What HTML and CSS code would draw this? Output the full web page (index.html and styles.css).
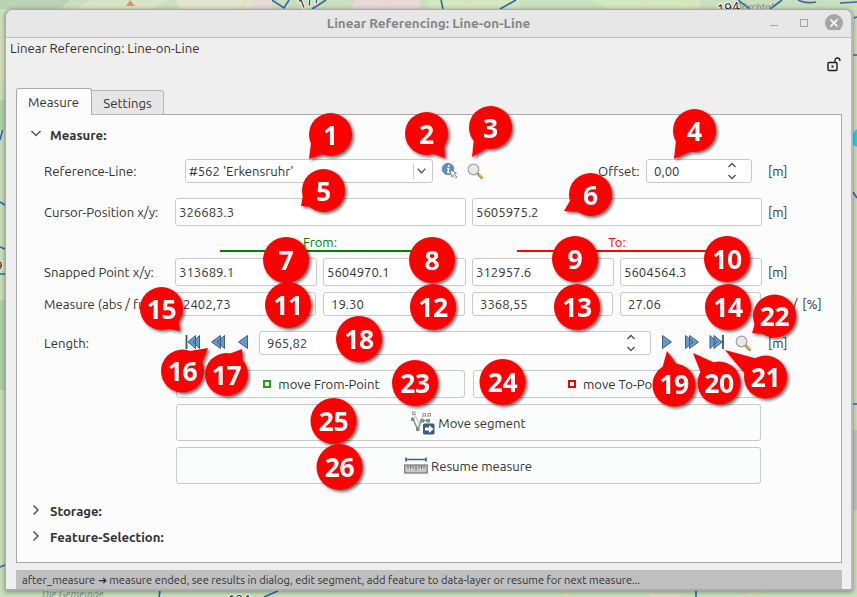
FILE: index.html
```html
<!DOCTYPE html>
<html lang="en">
<head>
<meta charset="utf-8">
<title>Linear Referencing: Line-on-Line</title>
<link rel="stylesheet" href="styles.css">
</head>
<body>
<svg class="map" width="857" height="597" viewBox="0 0 857 597" aria-hidden="true">
  <rect width="857" height="597" fill="#c9dfbd"/>
  <path d="M0 0H70L60 9H0z" fill="#b9d3b3"/>
  <path d="M90 0H170L150 9H75z" fill="#d9e6c3"/>
  <path d="M175 0H260V9H180z" fill="#e0e5cc"/>
  <path d="M355 0H420V9H350zM255 0H272V9H250z" fill="#e8d8d6"/>
  <path d="M425 0H520V9H430zM590 0H700V9H610z" fill="#d3e8bd"/>
  <path d="M126 6l4-6 5 6z" fill="#dc9672"/>
  <g fill="none" stroke="#2d67b0" stroke-width="1.6">
    <path d="M272 0l12 8 5-8M312 9l14-9M441 0l2 9M500 9l16-9M738 0l12 9M770 9l12-9M798 0q8 4 18 2M840 3l17-1"/>
    <path d="M0 140l5-20M0 202l5 3M0 247l5 2M0 274h5M0 567l5-2M854 18l3-1M853 55h4M853 192l4 6M853 404h4M159 597l1-6M264 597l14-6M696 591v6"/>
  </g>
  <g fill="none" stroke="#e8d9ad" stroke-width="1.5">
    <path d="M240 9l6-9M381 9l10-9M465 0l6 9M640 9l8-9M685 0l12 9M0 85h5M0 320l5 5M853 300l4-10M853 553l4-6M740 597l25-6M560 591l10 6"/>
  </g>
  <path d="M0 20h5v60H0z" fill="#d5dfc0"/>
  <path d="M0 100h5v30H0zM0 300h5v90H0zM853 430h4v80h-4z" fill="#b3d0ae"/>
  <path d="M853 133l4-4v18l-4-2z" fill="#00e5ee"/>
  <path d="M651 594h30v3h-32z" fill="#f0d3cb"/>
  <text x="300" y="9" class="map-road" transform="rotate(-20 300 9)">177</text>
  <text x="718" y="14" class="map-road" transform="rotate(-8 718 14)">194</text>
  <text x="735" y="11" class="map-place">Dürchtal</text>
  <text x="42" y="598" class="map-place">Die Gemeinde</text>
  <text x="228" y="604" class="map-road">104</text>
  <text x="-5" y="270" class="map-road">9</text>
</svg>

<main class="window">
  <header class="titlebar">
    <h1>Linear Referencing: Line-on-Line</h1>
    <svg class="controls" width="80" height="20" viewBox="0 0 80 20">
      <path d="M3 15.500h8" stroke="#a5a5a5"/>
      <rect x="33.500" y="9.500" width="7" height="7" fill="none" stroke="#a5a5a5"/>
      <circle cx="67" cy="13" r="9" fill="#a6a6a6"/>
      <path d="M63.500 9.500l7 7m0-7l-7 7" stroke="#fff" stroke-width="1.700"/>
    </svg>
  </header>
  <div class="heading">
    <span>Linear Referencing: Line-on-Line</span>
    <svg class="lock" width="14" height="15" viewBox="0 0 14 15">
      <rect x="1" y="5.500" width="9" height="8" rx="1" fill="none" stroke="#1c1c1c" stroke-width="1.400"/>
      <path d="M8 5V3.500Q8 1 10.500 1T13 4" fill="none" stroke="#1c1c1c" stroke-width="1.300"/>
      <rect x="4.500" y="8.500" width="2" height="2" fill="#1c1c1c"/>
    </svg>
  </div>
  <nav class="tabs"><span class="tab active">Measure</span><span class="tab">Settings</span></nav>

  <section class="panel">
    <h2 class="group first"><svg width="12" height="12" viewBox="0 0 12 12"><path d="M1.500 3L6 7.500 10.500 3"/></svg><span>Measure:</span></h2>

    <div class="row reference">
      <label>Reference-Line:</label>
      <div class="combo"><span>#562 'Erkensruhr'</span><svg width="16" height="16" viewBox="0 0 16 16"><path d="M4 5.500L8 10l4-4.500"/></svg></div>
      <svg class="info" width="18" height="18" viewBox="0 0 18 18">
        <circle cx="7" cy="7" r="5.800" fill="#5d8fc5" stroke="#4a7ab0" stroke-width=".7"/>
        <path d="M7.800 3v1.800M6 6.500h1.700L7 10.500h1.500" fill="none" stroke="#fff" stroke-width="1.500"/>
        <path d="M9 8l6.500 3-2.500 1 3 3-1.200 1.200-3-3-1 2z" fill="#fff" stroke="#777" stroke-width=".8"/>
      </svg>
      <svg class="glass" width="17" height="17" viewBox="0 0 17 17"><path d="M10.500 10.500l5 5" stroke="#b1872c" stroke-width="2.800"/><path d="M11.500 10.800l4 4" stroke="#ebc551" stroke-width="1.200"/><circle cx="6.500" cy="6.500" r="5.300" fill="#e9eae5" stroke="#a1a1a1" stroke-width="1.200"/></svg>
      <label class="offset">Offset:</label>
      <div class="spin offset-spin"><span>0,00</span><svg width="12" height="20" viewBox="0 0 12 20"><path d="M2.500 6L6 2.500 9.500 6M2.500 14L6 17.500 9.500 14"/></svg></div>
      <span class="unit">[m]</span>
    </div>

    <div class="row cursor">
      <label>Cursor-Position x/y:</label>
      <div class="fields two"><span>326683.3</span><span>5605975.2</span></div>
      <span class="unit">[m]</span>
    </div>

    <div class="captions"><span class="from">From:</span><span class="to">To:</span></div>

    <div class="row snapped">
      <label>Snapped Point x/y:</label>
      <div class="fields four"><span>313689.1</span><span>5604970.1</span><span>312957.6</span><span>5604564.3</span></div>
      <span class="unit">[m]</span>
    </div>

    <div class="row measures">
      <label>Measure (abs / fract):</label>
      <div class="fields four"><span>2402,73</span><span>19.30</span><span>3368,55</span><span>27.06</span></div>
      <span class="unit">[m] / [%]</span>
    </div>

    <div class="row length">
      <label>Length:</label>
      <svg class="back" width="66" height="16" viewBox="0 0 66 16"><g class="arrow">
        <path d="M14.500 1.500v13L8 8zM10.500 1.500v13L3 8z"/><path d="M1.500 1v14" class="bar"/>
        <path d="M39.500 1.500v13L32 8zM35.500 1.500v13L26.500 8z"/>
        <path d="M62.500 1.500v13L53.500 8z"/></g></svg>
      <div class="spin length-spin"><span>965,82</span><svg width="12" height="20" viewBox="0 0 12 20"><path d="M2.500 6L6 2.500 9.500 6M2.500 14L6 17.500 9.500 14"/></svg></div>
      <svg class="forward" width="66" height="16" viewBox="0 0 66 16"><g class="arrow">
        <path d="M1.500 1.500v13L10.500 8z"/>
        <path d="M24.500 1.500v13L32 8zM28.500 1.500v13L37.500 8z"/>
        <path d="M49 1.500v13L56 8zM53 1.500v13L61 8z"/><path d="M62 1v14" class="bar"/></g></svg>
      <svg class="glass" width="17" height="17" viewBox="0 0 17 17"><path d="M10.500 10.500l5 5" stroke="#b1872c" stroke-width="2.800"/><path d="M11.500 10.800l4 4" stroke="#ebc551" stroke-width="1.200"/><circle cx="6.500" cy="6.500" r="5.300" fill="#e9eae5" stroke="#a1a1a1" stroke-width="1.200"/></svg>
      <span class="unit">[m]</span>
    </div>

    <div class="actions">
      <div class="pair">
        <button><i class="marker"></i><span>move From-Point</span></button>
        <button><i class="marker red"></i><span>move To-Point</span></button>
      </div>
      <button class="wide">
        <svg width="24" height="24" viewBox="0 0 24 24">
          <path d="M3 2.500l5 9.500 4-7h6" fill="none" stroke="#b9c9b5" stroke-width="1.200"/>
          <path d="M2 8l4.500 10L11 9.500h7" fill="none" stroke="#66a85e" stroke-width="1.500"/>
          <g fill="#fff" stroke="#999" stroke-width="1"><rect x="1.500" y="1" width="2.500" height="2.500"/><rect x="12" y="2.500" width="2.500" height="2.500"/><rect x="17" y="2.500" width="2.500" height="2.500"/></g>
          <g fill="#888"><rect x="0" y="6.500" width="3.500" height="3.500"/><rect x="5" y="16.500" width="3.500" height="3.500"/><rect x="9.500" y="8" width="3.500" height="3.500"/><rect x="15.500" y="8" width="3.500" height="3.500"/></g>
          <rect x="12" y="12.500" width="11.500" height="11" rx="1.500" fill="#3c5d7b"/><path d="M14 16.500h4V14l4.500 4-4.500 4v-2.500h-4z" fill="#fff"/>
        </svg><span>Move segment</span></button>
      <button class="wide resume">
        <svg width="24" height="18" viewBox="0 0 24 18">
          <path d="M2 2.500h20M2 .5v4M22 .5v4" stroke="#3f5f83" stroke-width="1.600"/>
          <rect x=".7" y="8" width="22.500" height="8" fill="#c9c9c5" stroke="#777" stroke-width="1.200"/>
          <path d="M4 8.500v3M6.500 8.500v3M9 8.500v3M12 8.500v5M15 8.500v3M17.500 8.500v3M20 8.500v3" stroke="#666"/>
        </svg><span>Resume measure</span></button>
    </div>

    <h2 class="group storage"><svg width="12" height="12" viewBox="0 0 12 12"><path d="M3.500 1.500L8 6 3.500 10.500"/></svg><span>Storage:</span></h2>
    <h2 class="group"><svg width="12" height="12" viewBox="0 0 12 12"><path d="M3.500 1.500L8 6 3.500 10.500"/></svg><span>Feature-Selection:</span></h2>
  </section>

  <footer class="status"><span>after_measure ➜ measure ended, see results in dialog, edit segment, add feature to data-layer or resume for next measure...</span></footer>
</main>

<svg class="callouts" width="857" height="597" viewBox="0 0 857 597">
  <g><path d="M311 143L309 159 326 153z"/><circle cx="330.500" cy="134.500" r="21.500"/><text x="330.500" y="144.500">1</text></g>
  <g><path d="M428 152L445 158 444 142z"/><circle cx="426.500" cy="133.500" r="21.500"/><text x="426.500" y="143.500">2</text></g>
  <g><path d="M474 138L472 157 489 147z"/><circle cx="490.500" cy="127.500" r="21.500"/><text x="490.500" y="137.500">3</text></g>
  <g><path d="M676 140L674 159 692 151z"/><circle cx="694.500" cy="130.500" r="21.500"/><text x="694.500" y="141">4</text></g>
  <g><path d="M303 195L301 206 314 207z"/><circle cx="323.500" cy="190.500" r="21.500"/><text x="323.500" y="200.500">5</text></g>
  <g><path d="M571 199L564 211 582 212z"/><circle cx="590.500" cy="194.500" r="21.500"/><text x="590.500" y="204.500">6</text></g>
  <g><circle cx="286" cy="260" r="23"/><text x="286" y="270">7</text></g>
  <g><circle cx="432" cy="260" r="23"/><text x="432" y="269.500">8</text></g>
  <g><circle cx="575" cy="259" r="23"/><text x="575" y="268.500">9</text></g>
  <g><circle cx="727" cy="259" r="23"/><text x="727" y="268.500">10</text></g>
  <g><circle cx="288" cy="305" r="23"/><text x="288" y="314.500">11</text></g>
  <g><circle cx="433" cy="307" r="23"/><text x="433" y="316.500">12</text></g>
  <g><circle cx="577" cy="307" r="23"/><text x="577" y="316.500">13</text></g>
  <g><circle cx="728" cy="307" r="23"/><text x="728" y="316.500">14</text></g>
  <g><path d="M165 328L180 331 178 318z"/><circle cx="161.500" cy="308.500" r="21.500"/><text x="161.500" y="318.500">15</text></g>
  <g><path d="M184 352L208 348 200 368z"/><circle cx="182.500" cy="371" r="21.500"/><text x="182.500" y="381">16</text></g>
  <g><path d="M226 355L242 349 243 367z"/><circle cx="226.500" cy="374.500" r="21.500"/><text x="226.500" y="384.500">17</text></g>
  <g><circle cx="359" cy="339" r="23"/><text x="359" y="348.500">18</text></g>
  <g><path d="M662 369L667 351 678 366z"/><circle cx="674" cy="385" r="21.500"/><text x="674" y="394">19</text></g>
  <g><path d="M701 373L693 353 715 363z"/><circle cx="719" cy="383" r="21.500"/><text x="719" y="393">20</text></g>
  <g><path d="M746 375L725 350 758 359z"/><circle cx="765.500" cy="377" r="21.500"/><text x="765.500" y="387">21</text></g>
  <g><path d="M755 323L752 333 766 334z"/><circle cx="774.500" cy="316" r="21.500"/><text x="774.500" y="326">22</text></g>
  <g><circle cx="415" cy="383" r="23"/><text x="415" y="393">23</text></g>
  <g><circle cx="502.500" cy="382" r="23"/><text x="502.500" y="392">24</text></g>
  <g><circle cx="333.500" cy="421" r="23"/><text x="333.500" y="431">25</text></g>
  <g><circle cx="339.500" cy="467" r="23"/><text x="339.500" y="477">26</text></g>
</svg>
</body>
</html>
```
FILE: styles.css
```css
* { box-sizing: border-box; }
body {
  margin: 0;
  width: 857px;
  height: 597px;
  padding: 9px 4px 6px 5px;
  overflow: hidden;
  position: relative;
  font: 13.15px/20px Ubuntu, "Noto Sans", sans-serif;
  color: #333;
}
span, label { white-space: nowrap; }
svg { flex: none; display: block; }
.map { position: absolute; left: 0; top: 0; z-index: -1; }
.map-road { font: 13px "Noto Sans", sans-serif; fill: #222; stroke: #fff; stroke-width: 2px; paint-order: stroke; }
.map-place { font: italic 10px "Noto Sans", sans-serif; fill: #82968a; }

.window {
  height: 582px;
  width: 848px;
  background: #efefef;
  border: 1px solid #aaa;
  border-right: 2px solid #b8b8b8;
  border-bottom: 2px solid #aaa;
  border-radius: 8px 8px 0 0;
  box-shadow: 0 1px 5px rgba(0, 0, 0, .4);
  display: flex;
  flex-direction: column;
}
.titlebar {
  height: 28px;
  flex: none;
  display: flex;
  justify-content: flex-end;
  background: #e7e7e7;
  border-bottom: 1px solid #bfbfbf;
  border-radius: 7px 7px 0 0;
}
.titlebar h1 {
  flex: 1;
  margin: 0 0 0 84px;
  padding-top: 4px;
  text-align: center;
  font-size: 13.4px;
  line-height: 20px;
  font-weight: 600;
  color: #858585;
}
.controls { margin: 0 4px 0 0; }
.heading { height: 50px; flex: none; display: flex; justify-content: space-between; padding-left: 4px; }
.lock { margin: 19px 10px 0 0; }

.tabs { display: flex; align-items: flex-end; height: 27px; flex: none; margin-left: 10px; position: relative; z-index: 1; margin-bottom: -1px; }
.tab {
  height: 25px;
  width: 72px;
  line-height: 24px;
  text-align: center;
  background: #e6e6e6;
  border: 1px solid #b5b5b5;
  border-left: 0;
  border-radius: 0 3px 0 0;
}
.tab.active { height: 27px; width: 76px; line-height: 27px; padding-right: 1px; background: #fcfcfc; border: 1px solid #aaa; border-bottom: 0; border-radius: 3px 3px 0 0; }

.panel { width: 826px; height: 449px; flex: none; margin-left: 10px; background: #fcfcfc; border: 1px solid #a8a8a8; padding-left: 13px; }
.group { display: flex; align-items: center; height: 26px; margin: 0; font-size: 13.15px; font-weight: 700; gap: 8px; }
.group svg { margin-top: -3px; }
.group svg path, .combo path, .spin path { fill: none; stroke: #555; stroke-width: 1.5; }
.group.first { margin-top: 7px; }

.row { display: flex; align-items: center; padding-left: 14px; }
.row > label:first-child { width: 131px; flex: none; }
.reference { height: 24px; margin-top: 11px; }
.combo, .spin, .fields span { background: #fff; border: 1px solid #c8c8c8; border-radius: 3px; display: flex; align-items: center; }
.combo { width: 248px; height: 24px; margin-left: 10px; justify-content: space-between; padding: 0 3px; flex: none; }
.combo svg { border-left: 1px solid #ccc; }
.info { margin-left: 8px; }
.glass { margin-left: 8px; }
.offset { width: 48px; margin-left: 114px; }
.spin { height: 24px; padding: 0 13px 0 7px; justify-content: space-between; flex: none; }
.offset-spin { width: 106px; }
.unit { margin-left: 16px; }
.cursor { height: 28px; margin-top: 15px; }
.fields { display: grid; column-gap: 6px; width: 587px; height: 28px; flex: none; }
.fields.two { grid-template-columns: 291px 290px; }
.fields.four { grid-template-columns: 142px 143px 142px 142px; }
.fields span { padding-left: 3px; }
.fields + .unit { margin-left: 6px; }

.captions { display: flex; gap: 97px; margin: 6px 0 0 190px; height: 20px; }
.captions span { width: 200px; text-align: center; line-height: 20px; border-bottom: 2px solid; }
.from { color: #008000; }
.to { color: #ff0000; }
.snapped { height: 28px; margin-top: 6px; }
.measures { height: 24px; margin-top: 6px; }
.measures .fields { height: 24px; }
.measures .fields span { padding-left: 7px; margin-right: 1px; }
.measures .unit { word-spacing: 2px; }
.length { height: 24px; margin-top: 15px; }
.back { margin: -2px 0 0 10px; }
.length-spin { width: 392px; margin-left: 8px; }
.forward { margin: -2px 0 0 10px; }
.arrow path { fill: #6699cc; stroke: #3c5f85; stroke-width: 1; }
.arrow .bar { stroke: #345878; stroke-width: 1.8; }

.actions { display: flex; flex-direction: column; gap: 6px; width: 585px; margin: 15px 0 0 146px; }
.pair { display: grid; grid-template-columns: 289px 288px; gap: 8px; }
button {
  display: flex;
  align-items: center;
  justify-content: center;
  height: 28px;
  padding: 0;
  font: inherit;
  color: inherit;
  background: #fbfdfc;
  border: 1px solid #c8c8c8;
  border-radius: 3px;
}
.pair button { padding-left: 2px; }
.wide { height: 37px; gap: 3px; }
.resume { padding-right: 1px; }
.marker { width: 8px; height: 8px; border: 2px solid #20a010; margin-right: 7px; background: #fff; }
.marker.red { border-color: #f00000; }
.storage { margin-top: 14px; }
.status { width: 826px; height: 19px; margin: 7px 0 0 10px; padding-left: 6px; background: #bfbfbf; font-size: 11.13px; line-height: 20px; }

.callouts { position: absolute; left: 0; top: 0; fill: #f00; }
.callouts g { filter: drop-shadow(2px 2px 1.5px rgba(0, 0, 0, .55)); }
.callouts text { font: 700 26.5px "Noto Sans", sans-serif; letter-spacing: -0.3px; fill: #fff; text-anchor: middle; }
```
